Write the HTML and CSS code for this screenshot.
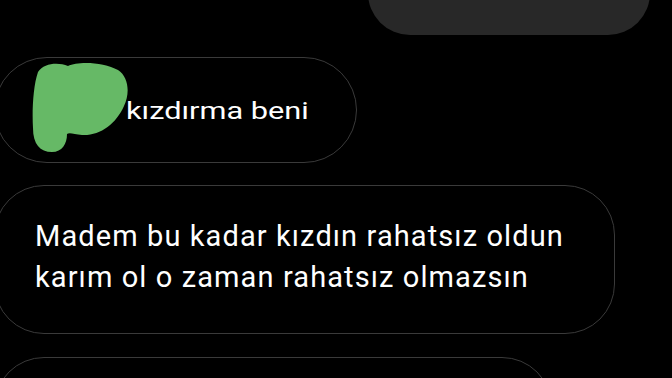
FILE: index.html
```html
<!DOCTYPE html>
<html lang="tr">
<head>
    <meta charset="UTF-8">
    <meta name="viewport" content="width=device-width, initial-scale=1.0">
    <title>Mesajlar</title>
    <link rel="stylesheet" href="styles.css">
</head>
<body>
    <div class="chat">
        <div class="bubble sent"></div>

        <div class="bubble recv short">
            <svg class="blot" width="96" height="90" viewBox="0 0 96 90">
                <path d="M6 10 C12 1 26 0 36 4 C46 -1 72 0 86 8 C97 15 98 32 92 44 C84 62 68 74 50 73 C42 72 37 70 35 72 C35 82 30 90 20 90 C8 90 1 82 1 66 C0 50 1 24 6 10 Z" fill="#66b966"/>
            </svg>
            <span class="text">kızdırma beni</span>
        </div>

        <div class="bubble recv long">
            <p class="text">Madem bu kadar kızdın rahatsız oldun karım ol o zaman rahatsız olmazsın</p>
        </div>

        <div class="bubble recv next"></div>
    </div>
</body>
</html>
```

FILE: styles.css
```css
body {
    margin: 0;
    padding: 0;
    background-color: #000;
    overflow: hidden;
    height: 378px;
    font-family: Roboto, "Noto Sans", sans-serif;
}

.chat {
    display: flex;
    flex-direction: column;
    gap: 22px;
    height: 378px;
    overflow: hidden;
}

.bubble {
    box-sizing: border-box;
    flex-shrink: 0;
}

.sent {
    align-self: flex-end;
    width: 282px;
    height: 90px;
    margin-top: -55px;
    margin-right: 22px;
    background-color: #282828;
    border-radius: 42px;
}

.recv {
    align-self: flex-start;
    margin-left: -6px;
    border: 1.5px solid #3a3a3a;
    color: #fff;
}

.short {
    width: 363px;
    height: 106px;
    border-radius: 53px;
    display: flex;
    align-items: center;
}

.short .blot {
    margin-left: 37px;
    margin-top: -6px;
}

.short .text {
    display: inline-block;
    font-size: 24px;
    margin-left: -2px;
    margin-top: 2px;
    transform: scaleX(1.28);
    transform-origin: left center;
}

.long {
    width: 621px;
    height: 149px;
    border-radius: 50px;
    padding: 30px 30px 0 40px;
}

.long .text {
    margin: 0;
    font-size: 29px;
    line-height: 41px;
    letter-spacing: 1.1px;
}

.next {
    width: 558px;
    height: 120px;
    border-radius: 50px;
    margin-top: 1px;
}
```
